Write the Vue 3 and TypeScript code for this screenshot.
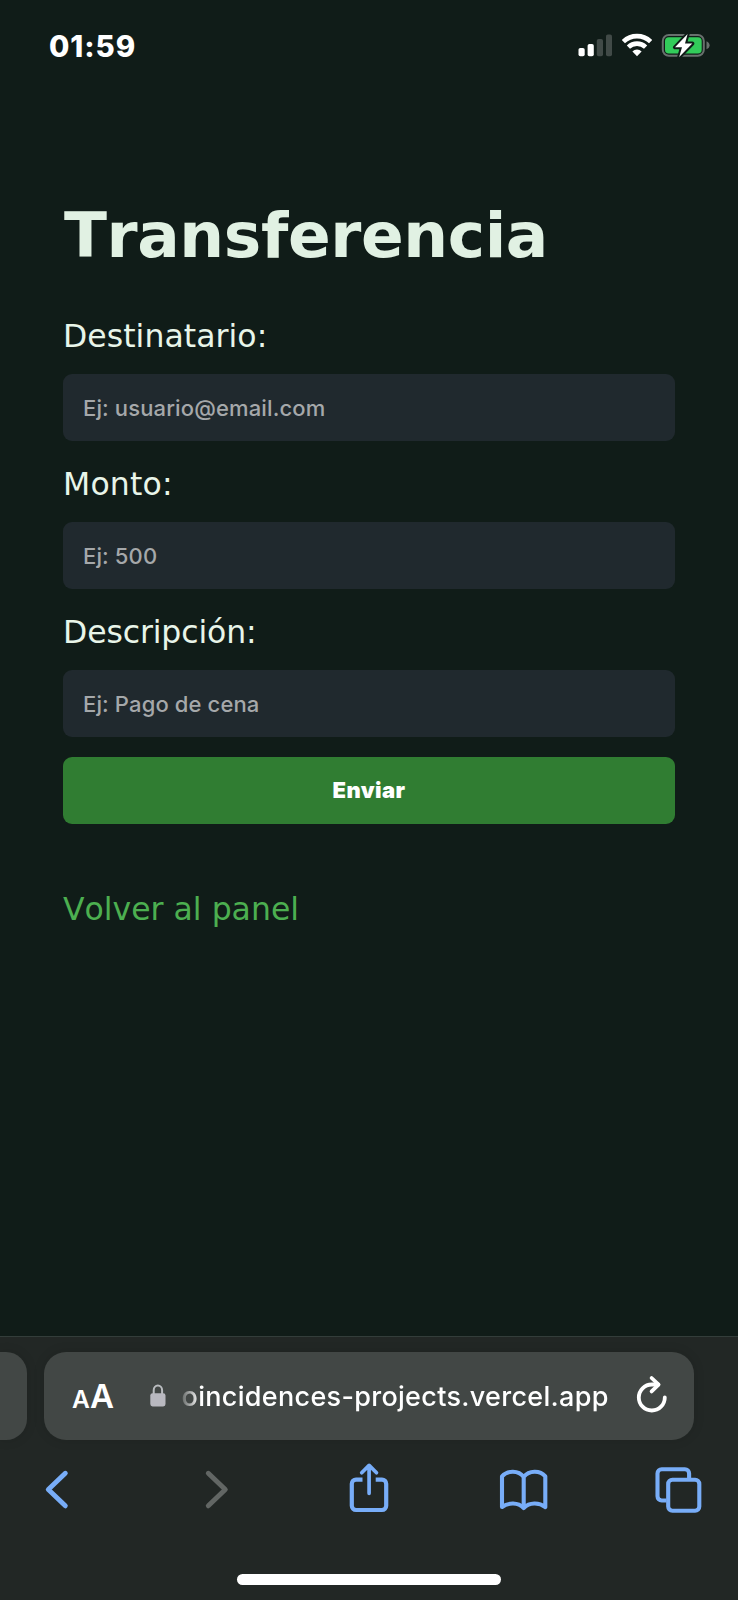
<script setup lang="ts">
import { reactive } from 'vue'

interface Field {
  id: 'recipient' | 'amount' | 'description'
  label: string
  placeholder: string
}

const fields: Field[] = [
  { id: 'recipient', label: 'Destinatario:', placeholder: 'Ej: usuario@email.com' },
  { id: 'amount', label: 'Monto:', placeholder: 'Ej: 500' },
  { id: 'description', label: 'Descripción:', placeholder: 'Ej: Pago de cena' },
]

const form = reactive({ recipient: '', amount: '', description: '' })
</script>

<template>
  <div class="screen">
    <header class="status">
      <span class="time">01:59</span>
      <div class="indicators">
        <svg class="signal" viewBox="578 34 34 23" width="34" height="23">
          <rect x="578.5" y="48" width="6.2" height="8.3" rx="1.8" fill="#fff" />
          <rect x="587.6" y="44" width="6.2" height="12.3" rx="1.8" fill="#fff" />
          <rect x="596.8" y="39" width="6.2" height="17.3" rx="1.8" fill="#414a47" />
          <rect x="606" y="34.4" width="6" height="21.9" rx="1.8" fill="#414a47" />
        </svg>
        <svg class="wifi" viewBox="622 33 30 24" width="30" height="24">
          <g fill="none" stroke="#fff" stroke-width="4.6">
            <path d="M623.4 41.6A19.6 19.6 0 0 1 650.6 41.6" />
            <path d="M628.4 47.1A12.4 12.4 0 0 1 645.6 47.1" />
          </g>
          <path d="M632.4 51.4a6.6 6.6 0 0 1 9.2 0L637 56.2z" fill="#fff" />
        </svg>
        <svg class="battery" viewBox="661 33 50 25" width="50" height="25">
          <rect x="662.8" y="35" width="41" height="20.8" rx="6" fill="none" stroke="#68706d" stroke-width="2" />
          <path d="M706.5 41.3c2 .8 3.1 2.3 3.1 4s-1.1 3.3-3.1 4z" fill="#68706d" />
          <rect x="665" y="37.2" width="36.7" height="16.4" rx="3.8" fill="#32cc5a" />
          <path
            d="M687.6 34.1L675 47.3H682L679.2 57L692.3 43.5H685Z"
            fill="#fff" stroke="#101c18" stroke-width="4" stroke-linejoin="round" paint-order="stroke"
          />
        </svg>
      </div>
    </header>

    <main class="page">
      <h1 class="title">Transferencia</h1>
      <form class="form" @submit.prevent>
        <template v-for="field in fields" :key="field.id">
          <label class="label" :class="field.id" :for="field.id">{{ field.label }}</label>
          <input :id="field.id" v-model="form[field.id]" class="input" type="text" :placeholder="field.placeholder" />
        </template>
        <button class="submit" type="submit">Enviar</button>
      </form>
      <a class="back-link">Volver al panel</a>
    </main>

    <footer class="browser">
      <div class="tabs-strip">
        <div class="prev-tab"></div>
        <div class="address">
          <span class="text-size"><span class="small-a">A</span><span class="big-a">A</span></span>
          <svg class="lock" viewBox="0 0 16 23" width="16" height="23">
            <path d="M3.7 10V6.2a4.2 4.6 0 0 1 8.4 0V10" fill="none" stroke="#b9bcbf" stroke-width="2" />
            <rect x="0.3" y="9.2" width="15.2" height="13.2" rx="2.3" fill="#b9b9c0" />
          </svg>
          <span class="url">oincidences-projects.vercel.app</span>
          <svg class="reload" viewBox="635 1374 34 40" width="34" height="40">
            <g fill="none" stroke="#fff" stroke-width="3.8" stroke-linecap="round" stroke-linejoin="round">
              <path d="M664.8 1397.5A13 13 0 1 1 651.8 1384.5H658" />
              <path d="M651.6 1378L658.6 1384.7L651.6 1391.4" />
            </g>
          </svg>
        </div>
      </div>

      <nav class="toolbar">
        <svg viewBox="27 1460 60 60" class="tool">
          <path d="M65.3 1473.3L48.3 1489.6L65.3 1505.8" stroke-width="4.9" />
        </svg>
        <svg viewBox="187 1460 60 60" class="tool disabled">
          <path d="M208.3 1473.3L225.3 1489.6L208.3 1505.8" stroke-width="4.9" />
        </svg>
        <svg viewBox="338.5 1460 60 60" class="tool">
          <path d="M362 1479.6H355.5a4.2 4.2 0 0 0-4.2 4.2V1505.8a4.2 4.2 0 0 0 4.2 4.2H381.5a4.2 4.2 0 0 0 4.2-4.2V1483.8a4.2 4.2 0 0 0-4.2-4.2H375.2" stroke-width="4.2" stroke-linecap="butt" />
          <path d="M368.6 1493.3V1466M361.2 1472.8L368.6 1465.4L376 1472.8" stroke-width="3.7" />
        </svg>
        <svg viewBox="494 1460 60 60" class="tool">
          <path d="M523.7 1477C518.5 1470.2 507.5 1470.2 502 1476.3V1507C508.5 1502.3 518 1502.2 523.7 1508C529.4 1502.2 539 1502.3 545.3 1507V1476.3C540 1470.2 529 1470.2 523.7 1477V1507.5" stroke-width="4.1" />
        </svg>
        <svg viewBox="648.5 1460 60 60" class="tool">
          <path d="M688.6 1478V1473.5a4.2 4.2 0 0 0-4.2-4.2H661.2a4.2 4.2 0 0 0-4.2 4.2V1496.3a4.2 4.2 0 0 0 4.2 4.2H666" stroke-width="4.1" stroke-linecap="butt" />
          <rect x="667.7" y="1479.8" width="31.1" height="30.9" rx="4.2" stroke-width="4.1" />
        </svg>
      </nav>
      <div class="home-bar"></div>
    </footer>
  </div>
</template>

<style>
body {
  margin: 0;
  background: #101c18;
}
</style>

<style scoped>
.screen {
  display: flex;
  flex-direction: column;
  width: 738px;
  height: 1600px;
  overflow: hidden;
  background: #101c18;
  font-family: 'Inter', 'Liberation Sans', sans-serif;
}

.status {
  display: flex;
  justify-content: space-between;
  align-items: center;
  box-sizing: border-box;
  height: 90px;
  padding: 0 27px 0 49px;
}

.time {
  padding-top: 1px;
  color: #fff;
  font-size: 29.5px;
  font-weight: 800;
  line-height: 36px;
  letter-spacing: 0.9px;
}

.indicators {
  display: flex;
  align-items: center;
}

.wifi {
  margin-left: 10px;
}

.battery {
  margin-left: 9px;
}

.page {
  flex: 1;
  display: flex;
  flex-direction: column;
  align-items: flex-start;
  padding: 108px 63px 0;
  font-family: 'DejaVu Sans', Verdana, sans-serif;
  font-kerning: none;
}

.title {
  margin: 0;
  padding-left: 1px;
  color: #e1f1e3;
  font-size: 63px;
  font-weight: 700;
  line-height: 76px;
  letter-spacing: -0.4px;
  white-space: nowrap;
}

.form {
  display: flex;
  flex-direction: column;
  width: 612px;
  margin-top: 42px;
}

.label {
  height: 40px;
  margin-bottom: 18px;
  color: #e8f5e9;
  font-size: 31.5px;
  line-height: 40px;
  white-space: nowrap;
}

.label.recipient {
  letter-spacing: 0.05px;
}

.label.amount {
  letter-spacing: 0.2px;
}

.label.description {
  letter-spacing: -0.12px;
}

.input {
  box-sizing: border-box;
  width: 100%;
  height: 67px;
  margin: 0 0 23px;
  padding: 0 20px;
  border: 0;
  border-radius: 9px;
  outline: 0;
  background: #20292e;
  color: #e8f5e9;
  font: 500 22px 'Inter', sans-serif;
  letter-spacing: 0.13px;
}

.input::placeholder {
  color: #a5a8aa;
  opacity: 1;
}

.submit {
  height: 67px;
  margin-top: -3px;
  padding: 0 0 2px;
  border: 0;
  border-radius: 9px;
  background: #307d32;
  color: #fff;
  font: 900 22px 'Inter', sans-serif;
  letter-spacing: 0.4px;
}

.back-link {
  margin-top: 65px;
  color: #4caf50;
  font-size: 31.5px;
  line-height: 40px;
  white-space: nowrap;
}

.browser {
  box-sizing: border-box;
  height: 264px;
  border-top: 1px solid #333d3a;
  background: #222725;
}

.tabs-strip {
  display: flex;
  gap: 16.4px;
  height: 88px;
  padding-top: 15px;
}

.prev-tab {
  width: 27.2px;
  border-radius: 0 21px 21px 0;
  background: #424745;
  box-shadow: 0 0 12px rgba(0, 0, 0, 0.12);
}

.address {
  display: flex;
  align-items: center;
  box-sizing: border-box;
  width: 650.7px;
  padding-left: 28.5px;
  border-radius: 22px;
  background: #424745;
  box-shadow: 0 0 12px rgba(0, 0, 0, 0.12);
  color: #fff;
}

.text-size {
  display: flex;
  align-items: baseline;
  width: 78px;
  padding-top: 3px;
  font-weight: 600;
  line-height: 40px;
}

.small-a {
  width: 18px;
  font-size: 24.5px;
}

.big-a {
  font-size: 33px;
}

.lock {
  margin-top: -2px;
}

.url {
  width: 428px;
  margin-left: 15.5px;
  padding-top: 1px;
  overflow: hidden;
  font-size: 27px;
  font-weight: 500;
  line-height: 40px;
  letter-spacing: 0.3px;
  white-space: nowrap;
  -webkit-mask-image: linear-gradient(to right, rgba(0, 0, 0, 0.2), #000 18px);
  mask-image: linear-gradient(to right, rgba(0, 0, 0, 0.2), #000 18px);
}

.reload {
  margin-left: 25px;
  margin-top: -5px;
}

.toolbar {
  display: grid;
  grid-template-columns: 160px 151.5px 155.5px 154.5px 60px;
  margin-top: 20px;
  padding-left: 27px;
}

.tool {
  width: 60px;
  height: 60px;
  fill: none;
  stroke: #78adf8;
  stroke-linecap: round;
  stroke-linejoin: round;
}

.tool.disabled {
  stroke: #626664;
}

.home-bar {
  width: 264px;
  height: 10.5px;
  margin: 54px auto 0;
  border-radius: 6px;
  background: #fff;
}
</style>
